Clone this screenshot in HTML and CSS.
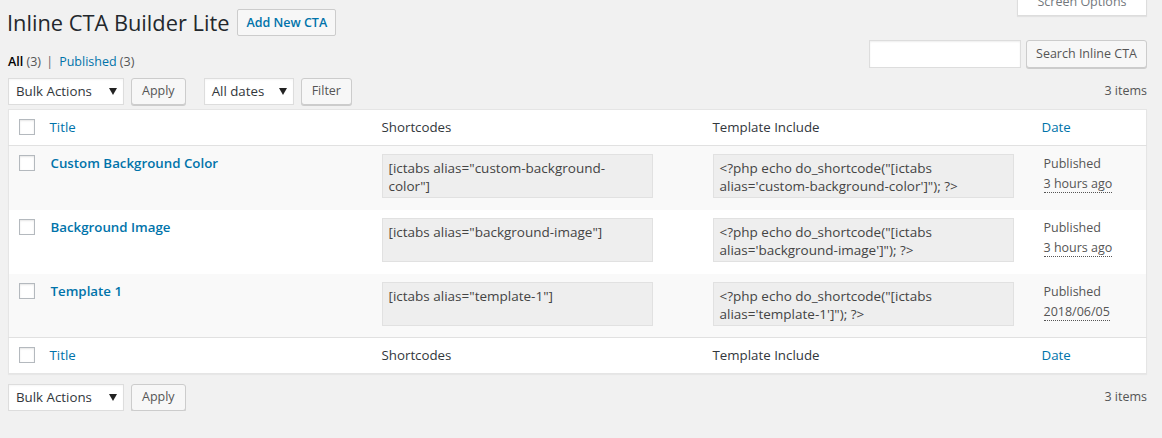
FILE: index.html
```html
<!DOCTYPE html>
<html lang="en">
<head>
<meta charset="utf-8">
<title>Inline CTA Builder Lite</title>
<link rel="stylesheet" href="styles.css">
</head>
<body>
<div class="wrap">
  <div class="screen-tab">Screen Options</div>

  <div class="page-head">
    <h1 class="page-title">Inline CTA Builder Lite</h1>
    <a class="btn btn-title" href="#">Add New CTA</a>
  </div>

  <div class="filters-row">
    <ul class="subsubsub">
      <li><span class="current">All</span> <span class="count">(3)</span> <span class="sep">|</span></li>
      <li><a href="#">Published</a> <span class="count">(3)</span></li>
    </ul>
    <div class="search-box">
      <span class="search-input"></span>
      <span class="btn">Search Inline CTA</span>
    </div>
  </div>

  <div class="tablenav top">
    <div class="actions">
      <span class="select w-bulk">Bulk Actions<svg class="caret" width="8" height="7" viewBox="0 0 8 7"><path d="M0 0H8L4 7Z" fill="#222"/></svg></span>
      <span class="btn">Apply</span>
    </div>
    <div class="actions">
      <span class="select w-dates">All dates<svg class="caret" width="8" height="7" viewBox="0 0 8 7"><path d="M0 0H8L4 7Z" fill="#222"/></svg></span>
      <span class="btn">Filter</span>
    </div>
    <div class="items">3 items</div>
  </div>

  <table class="list">
    <colgroup>
      <col class="c-cb"><col class="c-title"><col class="c-short"><col class="c-tpl"><col class="c-date">
    </colgroup>
    <thead>
      <tr>
        <th class="check"><span class="cbox"></span></th>
        <th><a href="#">Title</a></th>
        <th>Shortcodes</th>
        <th>Template Include</th>
        <th><a href="#">Date</a></th>
      </tr>
    </thead>
    <tbody>
      <tr class="alt">
        <td class="check"><span class="cbox"></span></td>
        <td><a class="row-title" href="#">Custom Background Color</a></td>
        <td><div class="code code-short">[ictabs alias="custom-background-color"]</div></td>
        <td><div class="code code-tpl">&lt;?php echo do_shortcode("[ictabs alias='custom-background-color']"); ?&gt;</div></td>
        <td class="date">Published<br><abbr>3 hours ago</abbr></td>
      </tr>
      <tr>
        <td class="check"><span class="cbox"></span></td>
        <td><a class="row-title" href="#">Background Image</a></td>
        <td><div class="code code-short">[ictabs alias="background-image"]</div></td>
        <td><div class="code code-tpl">&lt;?php echo do_shortcode("[ictabs alias='background-image']"); ?&gt;</div></td>
        <td class="date">Published<br><abbr>3 hours ago</abbr></td>
      </tr>
      <tr class="alt">
        <td class="check"><span class="cbox"></span></td>
        <td><a class="row-title" href="#">Template 1</a></td>
        <td><div class="code code-short">[ictabs alias="template-1"]</div></td>
        <td><div class="code code-tpl">&lt;?php echo do_shortcode("[ictabs alias='template-1']"); ?&gt;</div></td>
        <td class="date">Published<br><abbr>2018/06/05</abbr></td>
      </tr>
    </tbody>
    <tfoot>
      <tr>
        <th class="check"><span class="cbox"></span></th>
        <th><a href="#">Title</a></th>
        <th>Shortcodes</th>
        <th>Template Include</th>
        <th><a href="#">Date</a></th>
      </tr>
    </tfoot>
  </table>

  <div class="tablenav bottom">
    <div class="actions">
      <span class="select w-bulk">Bulk Actions<svg class="caret" width="8" height="7" viewBox="0 0 8 7"><path d="M0 0H8L4 7Z" fill="#222"/></svg></span>
      <span class="btn">Apply</span>
    </div>
    <div class="items">3 items</div>
  </div>
</div>
</body>
</html>
```
FILE: styles.css
```css
html, body {
  margin: 0;
  padding: 0;
  background: #f1f1f1;
}
body {
  font-family: "Open Sans", "Noto Sans", sans-serif;
  font-size: 12.5px;
  color: #444;
  line-height: 1.4;
}
a {
  color: #0073aa;
  text-decoration: none;
}
.wrap {
  position: relative;
  margin: 0 15px 0 8px;
  padding-top: 7px;
}
.screen-tab {
  position: absolute;
  top: -11px;
  right: 0;
  width: 130px;
  height: 27px;
  box-sizing: border-box;
  background: #fff;
  border: 1px solid #ddd;
  border-top: none;
  box-shadow: 0 1px 1px rgba(0,0,0,.06);
  color: #72777c;
  text-align: center;
  line-height: 26px;
  font-size: 12.5px;
}
.page-head {
  display: flex;
  align-items: center;
  height: 31px;
}
.page-title {
  margin: 0 8px 0 -1px;
  font-size: 21.8px;
  font-weight: 400;
  color: #23282d;
  line-height: 31px;
}
.btn {
  display: inline-flex;
  align-items: center;
  box-sizing: border-box;
  height: 27px;
  padding: 0 10px;
  background: #f7f7f7;
  border: 1px solid #ccc;
  border-radius: 3px;
  box-shadow: 0 1px 0 #ccc;
  color: #555;
  font-size: 12.5px;
  white-space: nowrap;
}
.btn-title {
  padding: 0 8px;
  color: #0073aa;
  font-weight: 600;
  box-shadow: none;
  border-radius: 2px;
}
.filters-row {
  display: flex;
  justify-content: space-between;
  align-items: flex-start;
  margin-top: 2px;
}
.subsubsub {
  list-style: none;
  margin: 13px 0 0 0;
  padding: 0;
  display: flex;
  line-height: 18px;
  color: #666;
}
.subsubsub li {
  margin-right: 4px;
}
.subsubsub .current {
  color: #000;
  font-weight: 600;
}
.subsubsub .count {
  color: #555;
}
.subsubsub .sep {
  margin: 0 2px;
  color: #666;
}
.search-box {
  display: flex;
  gap: 5px;
}
.search-input {
  display: block;
  box-sizing: border-box;
  width: 152px;
  height: 28px;
  background: #fff;
  border: 1px solid #ddd;
  box-shadow: inset 0 1px 2px rgba(0,0,0,.07);
}
.search-box .btn {
  height: 28px;
  width: 121px;
  justify-content: center;
  padding: 0;
}
.tablenav {
  display: flex;
  align-items: center;
  height: 28px;
}
.tablenav.top {
  margin: 6px 0 4px;
}
.tablenav.bottom {
  margin-top: 9px;
}
.actions {
  display: flex;
  gap: 7px;
  margin-right: 18px;
}
.select {
  display: inline-flex;
  align-items: center;
  justify-content: space-between;
  box-sizing: border-box;
  height: 27px;
  padding: 0 6px 0 7px;
  background: #fff;
  border: 1px solid #ddd;
  box-shadow: inset 0 1px 2px rgba(0,0,0,.04);
  color: #32373c;
  font-size: 13.3px;
}
.w-bulk { width: 116px; }
.w-dates { width: 90px; }
.caret { flex: none; }
.items {
  margin-left: auto;
  color: #555;
}
.list {
  width: 100%;
  border-collapse: collapse;
  table-layout: fixed;
  background: #fff;
  border: 1px solid #e5e5e5;
  box-shadow: 0 1px 1px rgba(0,0,0,.04);
}
.c-cb { width: 31px; }
.c-title { width: 332px; }
.c-short { width: 331px; }
.c-tpl { width: 329px; }
.c-date { width: auto; }
.list th, .list td {
  text-align: left;
  vertical-align: top;
  padding: 8px 10px;
  font-weight: 400;
  line-height: 19px;
}
.list th {
  font-size: 13.3px;
  color: #32373c;
}
.list thead th {
  border-bottom: 1px solid #e1e1e1;
}
.list tfoot th {
  border-top: 1px solid #e1e1e1;
}
.list .check {
  padding: 9px 0 0 10px;
}
.list tbody tr {
  height: 64px;
}
.list tbody tr.alt {
  background: #f9f9f9;
}
.cbox {
  display: block;
  width: 16px;
  height: 16px;
  box-sizing: border-box;
  border: 1px solid #b4b9be;
  background: #fff;
  box-shadow: inset 0 1px 2px rgba(0,0,0,.1);
}
.row-title {
  font-size: 13.3px;
  font-weight: 600;
  line-height: 19px;
  display: inline-block;
  margin-left: 1px;
}
.code {
  box-sizing: border-box;
  height: 44px;
  padding: 4px 10px 4px 6px;
  background: #eee;
  border: 1px solid #e1e1e1;
  color: #444;
  font-size: 13.5px;
  line-height: 18px;
}
.code-short { width: 271px; }
.code-tpl { width: 301px; }
.date {
  color: #555;
  line-height: 20px !important;
  padding-left: 12px !important;
}
.date abbr {
  text-decoration: none;
  border-bottom: 1px dotted #555;
}
```
